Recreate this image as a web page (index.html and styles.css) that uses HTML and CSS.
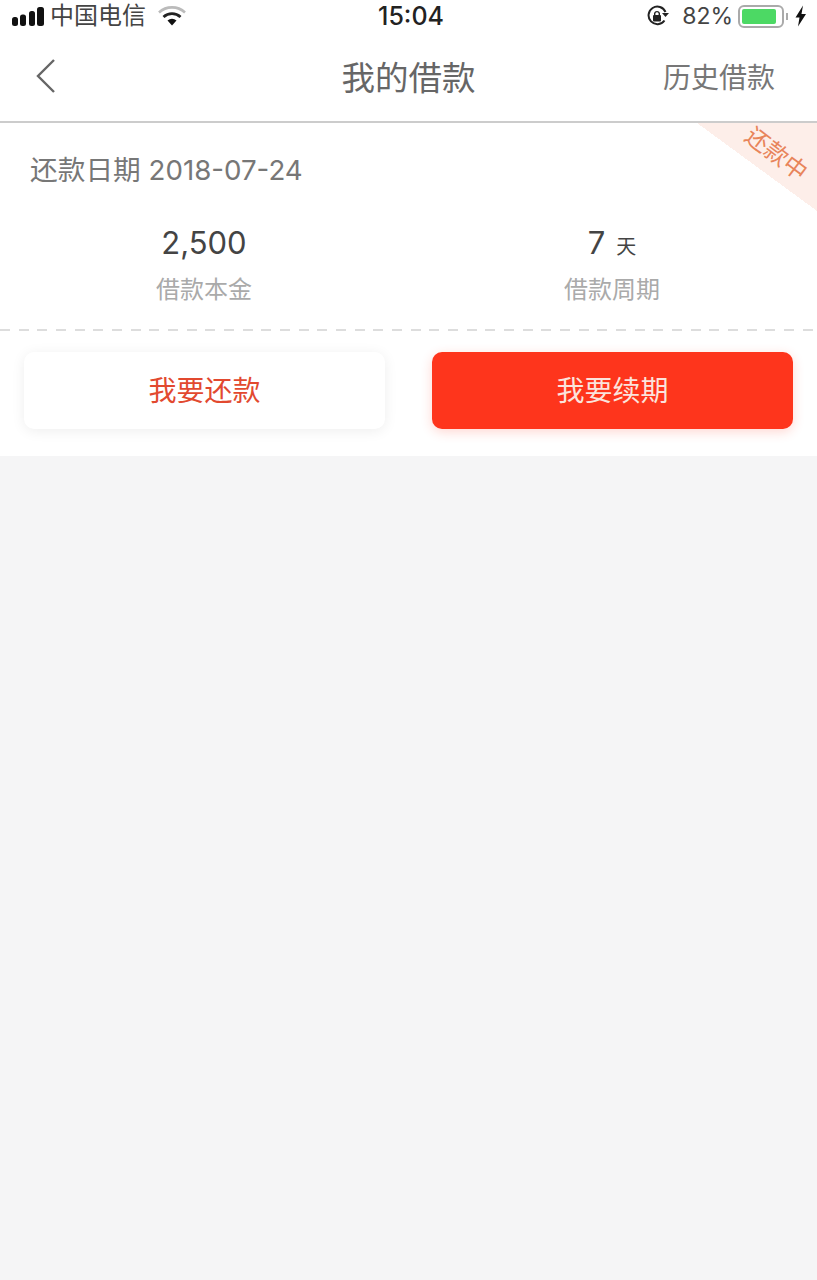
FILE: index.html
```html
<!DOCTYPE html>
<html lang="zh-CN">
<head>
  <meta charset="UTF-8">
  <title>我的借款</title>
  <link rel="stylesheet" href="styles.css">
</head>
<body>
  <div class="statusbar">
    <div class="status-left">
      <svg class="signal" width="33" height="20" viewBox="0 0 33 20">
        <rect x="0" y="10" width="6" height="9" rx="2.5"/>
        <rect x="8" y="7.5" width="6" height="11.5" rx="2.5"/>
        <rect x="17" y="4" width="6" height="15" rx="2.5"/>
        <rect x="25" y="0" width="7" height="19" rx="2.5"/>
      </svg>
      <span class="carrier">中国电信</span>
      <svg class="wifi" width="28" height="20" viewBox="0 0 28 20">
        <path d="M1 6.5 A19 19 0 0 1 27 6.5" fill="none" stroke="#bbb" stroke-width="2.6"/>
        <path d="M5.5 11 A12.5 12.5 0 0 1 22.5 11" fill="none" stroke="#222" stroke-width="2.8"/>
        <path d="M9.5 14.5 A7 7 0 0 1 18.5 14.5 L14 19.5 Z" fill="#111"/>
      </svg>
    </div>
    <div class="clock">15:04</div>
    <div class="status-right">
      <svg class="lock" width="24" height="22" viewBox="0 0 24 22">
        <path d="M18.5 15.5 A8.8 8.8 0 1 1 19.5 7" fill="none" stroke="#222" stroke-width="2"/>
        <path d="M16 8 L23 8 L19.5 12 Z" fill="#222"/>
        <rect x="7" y="10" width="8" height="6.5" rx="1" fill="#222"/>
        <path d="M8.7 10 V8.3 A2.4 2.4 0 0 1 13.3 8.3 V10" fill="none" stroke="#222" stroke-width="1.4"/>
      </svg>
      <span class="battery-pct">82%</span>
      <div class="battery">
        <div class="battery-fill"></div>
      </div>
      <div class="battery-cap"></div>
      <svg class="bolt" width="13" height="22" viewBox="0 0 13 22">
        <path d="M9 0.5 L1.5 12.5 H5.5 L4 21.5 L12 9 H7.5 Z" fill="#111"/>
      </svg>
    </div>
  </div>

  <header class="navbar">
    <svg class="back" width="24" height="36" viewBox="0 0 24 36">
      <path d="M20 2 L4 18 L20 34" fill="none" stroke="#666" stroke-width="2.4"/>
    </svg>
    <h1 class="nav-title">我的借款</h1>
    <a class="nav-link">历史借款</a>
  </header>

  <section class="loan">
    <div class="ribbon"><span class="ribbon-text">还款中</span></div>
    <div class="due">还款日期 2018-07-24</div>
    <div class="stats">
      <div class="stat">
        <div class="stat-value">2,500</div>
        <div class="stat-label">借款本金</div>
      </div>
      <div class="stat">
        <div class="stat-value">7 <small>天</small></div>
        <div class="stat-label">借款周期</div>
      </div>
    </div>
    <div class="dash"></div>
    <div class="actions">
      <button class="btn btn-plain">我要还款</button>
      <button class="btn btn-primary">我要续期</button>
    </div>
  </section>
</body>
</html>
```

FILE: styles.css
```css
* {
  margin: 0;
  padding: 0;
  box-sizing: border-box;
}

body {
  min-height: 100vh;
  background: #f5f5f6;
  font-family: "Inter", "Noto Sans CJK SC", sans-serif;
  overflow: hidden;
}

.statusbar {
  height: 32px;
  background: #fff;
  display: grid;
  grid-template-columns: 1fr auto 1fr;
  align-items: center;
  padding: 0 10px 0 12px;
  color: #333;
}

.status-left,
.status-right {
  display: flex;
  align-items: center;
}

.status-right {
  justify-content: flex-end;
}

.signal {
  fill: #111;
  margin-top: 1px;
}

.carrier {
  font-size: 24px;
  line-height: 30px;
  margin-left: 5px;
  color: #444;
}

.wifi {
  margin-left: 12px;
}

.clock {
  padding-left: 3px;
  font-size: 25px;
  font-weight: 500;
  line-height: 30px;
  color: #222;
}

.battery-pct {
  font-size: 23px;
  color: #444;
  margin-left: 12px;
}

.battery {
  width: 46px;
  height: 23px;
  margin-left: 5px;
  border: 2px solid #aaa;
  border-radius: 6px;
  padding: 2px;
}

.battery-fill {
  width: 34px;
  height: 100%;
  background: #4cd964;
  border-radius: 2px;
}

.battery-cap {
  width: 2px;
  height: 7px;
  margin-left: 2px;
  background: #aaa;
}

.bolt {
  margin-left: 6px;
}

.navbar {
  height: 91px;
  background: #fff;
  display: flex;
  align-items: center;
  justify-content: space-between;
  position: relative;
  padding: 0 42px 2px 34px;
  border-bottom: 2px solid #ccc;
}

.nav-title {
  position: absolute;
  left: 0;
  right: 0;
  text-align: center;
  font-size: 33.5px;
  font-weight: 400;
  color: #666;
}

.nav-link {
  font-size: 28px;
  color: #777;
}

.loan {
  position: relative;
  height: 333px;
  background: #fff;
}

.ribbon {
  position: absolute;
  top: 0;
  right: 0;
  width: 120px;
  height: 88px;
  background: linear-gradient(to top right, transparent 50%, #fdeee9 50%);
}

.ribbon-text {
  position: absolute;
  top: 16px;
  right: 6px;
  font-size: 23.5px;
  line-height: 30px;
  color: #e8845a;
  white-space: nowrap;
  transform: rotate(37deg);
}

.due {
  padding: 27px 0 0 30px;
  font-size: 27.7px;
  line-height: 40px;
  color: #777;
}

.stats {
  display: grid;
  grid-template-columns: 408px 408px;
  margin-top: 32px;
  height: 107px;
}

.stat {
  text-align: center;
}

.stat-value {
  height: 42px;
  font-size: 31px;
  line-height: 42px;
  color: #444;
}

.stat-value small {
  font-size: 20px;
  margin-left: 2px;
}

.stat-label {
  margin-top: 9px;
  font-size: 24px;
  line-height: 34px;
  color: #aaa;
}

.dash {
  height: 2px;
  background: repeating-linear-gradient(to right, #ddd 0 10px, transparent 10px 18.67px);
}

.actions {
  display: flex;
  justify-content: space-between;
  padding: 21px 24px 0;
}

.btn {
  width: 361px;
  height: 77px;
  padding-bottom: 4px;
  border: none;
  border-radius: 10px;
  font-family: inherit;
  font-size: 28px;
}

.btn-plain {
  background: #fff;
  color: #e2492f;
  box-shadow: 0 2px 14px rgba(0, 0, 0, 0.07);
}

.btn-primary {
  background: #fe351c;
  color: #fbe3dc;
  box-shadow: 0 3px 12px rgba(254, 53, 28, 0.2);
}
```
